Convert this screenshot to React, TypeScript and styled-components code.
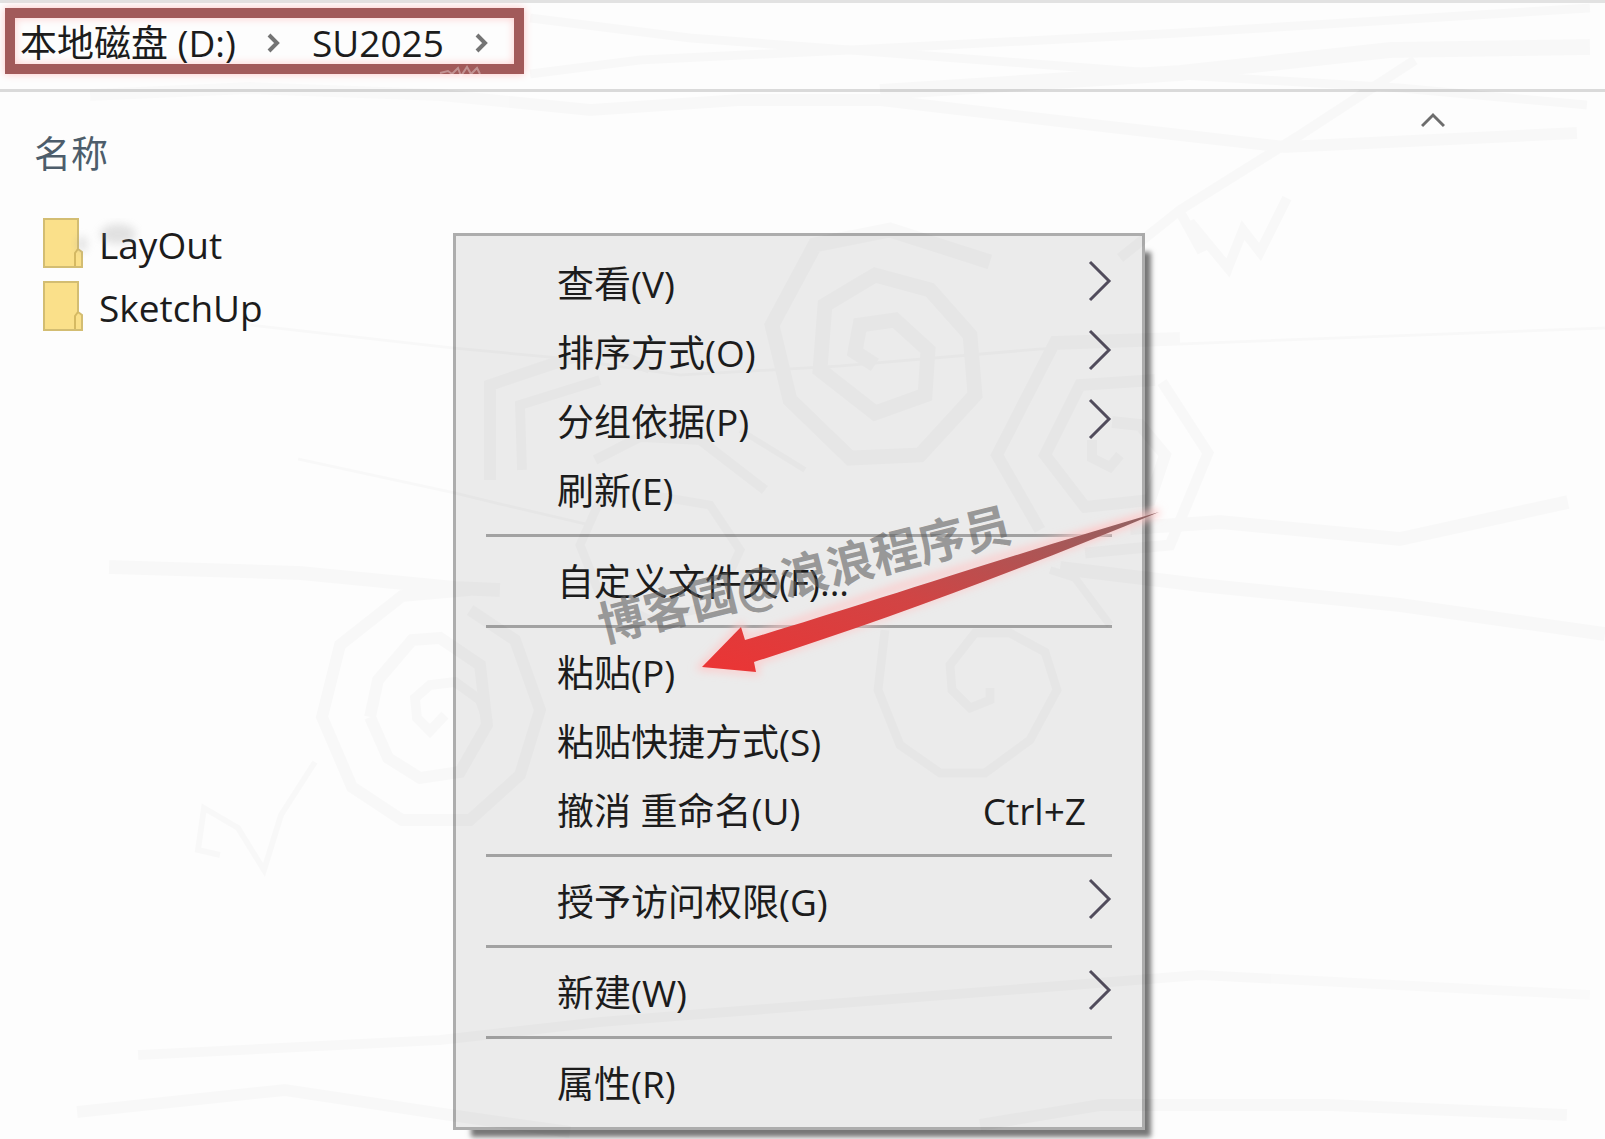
import React from "react";
import styled, { createGlobalStyle } from "styled-components";

const GlobalStyle = createGlobalStyle`
  * { box-sizing: border-box; }
  body {
    margin: 0;
    background: #fdfdfd;
    color: #1c1c1c;
    font: 37px/48px "Open Sans", "Noto Sans CJK SC", sans-serif;
  }
  button {
    margin: 0;
    padding: 0;
    border: 0;
    background: none;
    color: inherit;
    font: inherit;
    text-align: left;
  }
`;

const Page = styled.main`
  position: relative;
  min-height: 100vh;
  overflow: hidden;
`;

const AddressBar = styled.header`
  display: flex;
  padding: 5px 5px 15px;
  border-top: 3px solid #e2e2e2;
  border-bottom: 3px solid #dadada;
`;

const Breadcrumb = styled.nav`
  display: flex;
  align-items: center;
  gap: 30px;
  height: 66px;
  padding: 4px 24px 0 5px;
  border: 10px solid #a25a5a;
  box-shadow: 0 0 8px #ffc4c4, inset 0 0 8px #ffc9c9;
`;

const ColumnHeader = styled.div`
  display: flex;
  justify-content: space-between;
  align-items: flex-start;
  padding: 20px 160px 0 34px;
`;

const ColumnName = styled.button`
  && {
    padding-top: 18px;
    color: #4d5d6b;
  }
`;

const FileList = styled.ul`
  display: flex;
  flex-direction: column;
  margin: 0;
  padding: 33px 43px 0;
  list-style: none;
`;

const FileRow = styled.button`
  && {
    display: flex;
    align-items: center;
    gap: 15px;
    height: 63px;
  }
`;

const FileName = styled.span`
  padding-top: 4px;
`;

const Menu = styled.div`
  position: absolute;
  top: 233px;
  left: 453px;
  width: 692px;
  padding: 13px 0 9px;
  border: 3px solid #adadad;
  background: #ebebeb;
  box-shadow: 12px 13px 5px -6px #777;
`;

const MenuItem = styled.button`
  && {
    display: flex;
    align-items: center;
    justify-content: space-between;
    width: 100%;
    height: 69px;
    padding: 0 30px 0 101px;
  }
`;

const Shortcut = styled.span`
  padding-right: 26px;
`;

const Separator = styled.hr`
  height: 3px;
  margin: 9px 30px 10px;
  border: 0;
  background: #a2a2a2;
`;

const Overlay = styled.svg`
  position: absolute;
  inset: 0;
  width: 100%;
  height: 100%;
  pointer-events: none;
`;

const Watermark = styled.div`
  position: absolute;
  top: 537px;
  left: 592px;
  color: rgba(96, 96, 96, 0.6);
  font: 700 47px/70px "Noto Sans CJK SC", sans-serif;
  white-space: nowrap;
  transform: rotate(-14deg);
  pointer-events: none;
`;

const CrumbArrow = () => (
  <svg width="16" height="22" viewBox="0 0 16 22" fill="none" stroke="#747474" strokeWidth="4" aria-hidden="true">
    <path d="M3 3l8 8-8 8" />
  </svg>
);

const SubmenuArrow = () => (
  <svg width="24" height="48" viewBox="0 0 24 48" fill="none" stroke="#514c5c" strokeWidth="3" aria-hidden="true">
    <path d="M2 2l19 19L2 40" />
  </svg>
);

const SortArrow = () => (
  <svg width="24" height="17" viewBox="0 0 24 17" fill="none" stroke="#6d6d6d" strokeWidth="3" aria-hidden="true">
    <path d="M1 14L12 3l11 11" />
  </svg>
);

const Folder = () => (
  <svg width="41" height="50" viewBox="0 0 41 50" aria-hidden="true">
    <path d="M1 1h34v30l4 3v15H1z" fill="#fae08a" stroke="#d3bd72" strokeWidth="2" />
    <path d="M32 48V35l3-4" fill="none" stroke="#d5b962" strokeWidth="2" />
  </svg>
);

type Entry = { label: string; submenu?: boolean; shortcut?: string };

const groups: Entry[][] = [
  [
    { label: "查看(V)", submenu: true },
    { label: "排序方式(O)", submenu: true },
    { label: "分组依据(P)", submenu: true },
    { label: "刷新(E)" },
  ],
  [{ label: "自定义文件夹(F)..." }],
  [
    { label: "粘贴(P)" },
    { label: "粘贴快捷方式(S)" },
    { label: "撤消 重命名(U)", shortcut: "Ctrl+Z" },
  ],
  [{ label: "授予访问权限(G)", submenu: true }],
  [{ label: "新建(W)", submenu: true }],
  [{ label: "属性(R)" }],
];

const strokes: [number, string][] = [
  [3, "298,459 455,493 500,504 590,525"],
  [14, "109,567 300,573 455,588 500,590"],
  [12, "470,590 402,596 340,645 322,717 352,787 402,820 470,820 520,775 540,710 515,640 470,610"],
  [12, "370,717 388,758 420,778 460,772 487,725 480,665 440,638 412,640 378,680 370,717"],
  [10, "445,715 430,731 417,718 415,698 430,685 455,682 480,700 488,722"],
  [6, "220,855 198,850 204,808 238,828 264,870 281,815 315,762"],
  [9, "530,74 640,60 850,50 1180,33 1590,8"],
  [9, "530,18 690,38 850,50 1180,75 1400,88 1587,105"],
  [16, "880,92 1180,73 1390,50 1590,47"],
  [12, "90,95 250,88 440,95 590,110 740,100 880,100 1050,120 1180,135 1285,147 1577,133"],
  [10, "1415,60 1300,135 1180,210 1120,258"],
  [10, "1180,212 1202,252 1190,222 1228,268 1243,230 1260,252 1287,198"],
  [3, "250,325 453,348 560,358 680,375 840,366 1040,349 1180,344 1605,328"],
  [12, "1180,338 1055,342 997,455 1040,530"],
  [12, "1155,380 1080,385 1045,455 1085,507 1150,500 1165,455 1140,425 1112,422"],
  [11, "1162,382 1208,453 1170,545 1085,553"],
  [10, "1092,440 1092,458 1110,467 1120,455"],
  [14, "1130,528 1220,522 1400,539 1568,502"],
  [14, "1060,568 1200,585 1400,605 1605,634"],
  [8, "1050,570 1075,578 1110,625"],
  [9, "885,630 878,690 900,745 940,773 985,773 1030,740 1057,690 1045,652 1010,633 975,633 950,665 952,690 970,708 990,700 990,688"],
  [15, "990,262 890,230 815,245 772,325 790,400 850,458 920,455 975,395 970,335 930,290 875,275 825,305 820,370 875,413 925,395 928,350 895,320 860,325 855,352 875,365"],
  [12, "490,480 490,385 600,348 650,368"],
  [10, "522,470 520,405 600,380"],
  [6, "740,430 805,470"],
  [10, "595,460 640,437 700,440 765,490"],
  [9, "600,500 580,545 600,595 650,620 715,605 740,550 710,505 650,495"],
  [10, "138,1055 440,1040 600,1022 880,1000 1200,975 1590,995"],
  [12, "77,1112 285,1090 450,1115 570,1132"],
  [12, "980,1125 1100,1105 1330,1105 1567,1115"],
];

export default function App() {
  return (
    <Page>
      <GlobalStyle />
      <AddressBar>
        <Breadcrumb aria-label="路径">
          <button type="button">本地磁盘 (D:)</button>
          <CrumbArrow />
          <button type="button">SU2025</button>
          <CrumbArrow />
        </Breadcrumb>
      </AddressBar>
      <ColumnHeader>
        <ColumnName type="button">名称</ColumnName>
        <SortArrow />
      </ColumnHeader>
      <FileList>
        {["LayOut", "SketchUp"].map((name) => (
          <li key={name}>
            <FileRow type="button">
              <Folder />
              <FileName>{name}</FileName>
            </FileRow>
          </li>
        ))}
      </FileList>
      <Menu role="menu">
        {groups.map((items, index) => (
          <React.Fragment key={items[0].label}>
            {index > 0 && <Separator />}
            {items.map(({ label, submenu, shortcut }) => (
              <MenuItem key={label} type="button" role="menuitem">
                <span>{label}</span>
                {submenu && <SubmenuArrow />}
                {shortcut && <Shortcut>{shortcut}</Shortcut>}
              </MenuItem>
            ))}
          </React.Fragment>
        ))}
      </Menu>
      <Overlay aria-hidden="true">
        <defs>
          <linearGradient id="arrow" x1="0" y1="1" x2="1" y2="0">
            <stop offset="0" stopColor="#ec3434" />
            <stop offset="0.45" stopColor="#d14444" />
            <stop offset="1" stopColor="#8e6464" />
          </linearGradient>
          <filter id="glow" x="-10%" y="-20%" width="120%" height="140%">
            <feGaussianBlur stdDeviation="4" />
          </filter>
        </defs>
        <g fill="none" stroke="#000" opacity="0.016">
          {strokes.map(([width, points]) => (
            <polyline key={points} strokeWidth={width} points={points} />
          ))}
        </g>
        <g filter="url(#glow)" fill="#999" opacity="0.28">
          <ellipse cx="118" cy="234" rx="18" ry="10" />
          <ellipse cx="82" cy="244" rx="5" ry="8" />
        </g>
        <path d="M440 73l8-2 4 3 6-6 3 8 6-9 4 7 6-6 3 6" fill="none" stroke="#fff" strokeWidth="2" opacity="0.35" />
        <path d="M702 667L741 627 745 640 896 588 1159 512 936 597 754 662 756 672z" fill="none" stroke="#ffc8c8" strokeWidth="6" filter="url(#glow)" />
        <path d="M702 667L741 627 745 640C850 609 1010 555 1159 512C1030 566 880 622 754 662L756 672z" fill="url(#arrow)" />
      </Overlay>
      <Watermark>博客园@浪浪程序员</Watermark>
    </Page>
  );
}
